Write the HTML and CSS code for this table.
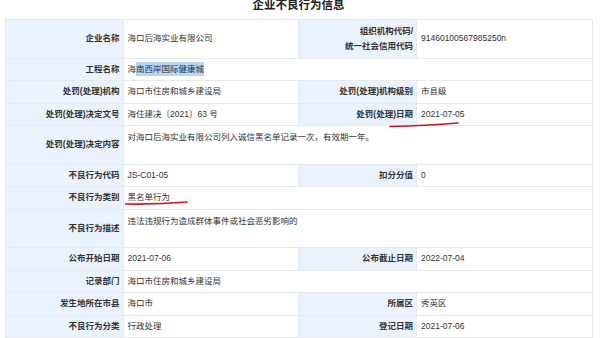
FILE: index.html
```html
<!DOCTYPE html>
<html lang="zh-CN">
<head>
<meta charset="utf-8">
<title>企业不良行为信息</title>
<link rel="stylesheet" href="styles.css">
</head>
<body>
<div class="page">
  <h1 class="title">企业不良行为信息</h1>
  <table class="info">
    <colgroup>
      <col class="c-label1"><col class="c-value1"><col class="c-label2"><col class="c-value2">
    </colgroup>
    <tbody>
      <tr class="r-double">
        <th>企业名称</th><td>海口后海实业有限公司</td>
        <th>组织机构代码/<br>统一社会信用代码</th><td>91460100567985250n</td>
      </tr>
      <tr>
        <th>工程名称</th><td colspan="3">海<span class="sel">南西岸国际健康城</span></td>
      </tr>
      <tr>
        <th>处罚(处理)机构</th><td>海口市住房和城乡建设局</td>
        <th>处罚(处理)机构级别</th><td>市县级</td>
      </tr>
      <tr>
        <th>处罚(处理)决定文号</th><td>海住建决〔2021〕63 号</td>
        <th>处罚(处理)日期</th><td>2021-07-05</td>
      </tr>
      <tr class="r-double">
        <th>处罚(处理)决定内容</th><td colspan="3" class="top">对海口后海实业有限公司列入诚信黑名单记录一次，有效期一年。</td>
      </tr>
      <tr>
        <th>不良行为代码</th><td>JS-C01-05</td>
        <th>扣分分值</th><td>0</td>
      </tr>
      <tr>
        <th>不良行为类别</th><td colspan="3">黑名单行为</td>
      </tr>
      <tr class="r-double">
        <th>不良行为描述</th><td colspan="3" class="top">违法违规行为造成群体事件或社会恶劣影响的</td>
      </tr>
      <tr>
        <th>公布开始日期</th><td>2021-07-06</td>
        <th>公布截止日期</th><td>2022-07-04</td>
      </tr>
      <tr>
        <th>记录部门</th><td colspan="3">海口市住房和城乡建设局</td>
      </tr>
      <tr>
        <th>发生地所在市县</th><td>海口市</td>
        <th>所属区</th><td>秀英区</td>
      </tr>
      <tr>
        <th>不良行为分类</th><td>行政处理</td>
        <th>登记日期</th><td>2021-07-06</td>
      </tr>
    </tbody>
  </table>
  <svg class="marks" width="600" height="338" viewBox="0 0 600 338" aria-hidden="true">
    <path d="M390 126.5 Q 426 125.5 458 123" />
    <path d="M125.5 204 Q 158 204.5 187 202" />
  </svg>
</div>
</body>
</html>
```

FILE: styles.css
```css
html, body {
  margin: 0;
  padding: 0;
  background: #ffffff;
}

.page {
  position: relative;
  width: 600px;
  height: 338px;
  overflow: hidden;
  padding: 0 8px 0 5px;
  box-sizing: border-box;
  font-family: "Liberation Sans", "Noto Sans CJK SC", sans-serif;
  color: #333333;
}

.title {
  margin: -1px 0 8px 0;
  font-size: 11.5px;
  line-height: 12px;
  font-weight: bold;
  text-align: center;
  color: #222222;
}

.info {
  width: 587px;
  border-collapse: collapse;
  table-layout: fixed;
  font-size: 8.5px;
  line-height: 15px;
}

.c-label1 { width: 117.5px; }
.c-value1 { width: 175.5px; }
.c-label2 { width: 118px; }
.c-value2 { width: 176px; }

.info tr {
  height: 22.5px;
}

.info tr.r-double {
  height: 38.5px;
}

.info th,
.info td {
  border: 1px solid #e6e9ee;
  padding: 0 4px;
  vertical-align: middle;
}

.info th {
  background: #eaf3fd;
  text-align: right;
  font-weight: bold;
  color: #333333;
  padding-right: 3px;
}

.info td {
  text-align: left;
  background: #ffffff;
  padding-left: 4px;
}

.info td.top {
  vertical-align: top;
  padding-top: 4px;
}

.sel {
  background: #b5d5fb;
  padding: 2px 0;
}

.marks {
  position: absolute;
  left: 0;
  top: 0;
  pointer-events: none;
}

.marks path {
  fill: none;
  stroke: #d4111c;
  stroke-width: 1.6;
  stroke-linecap: round;
}
```
